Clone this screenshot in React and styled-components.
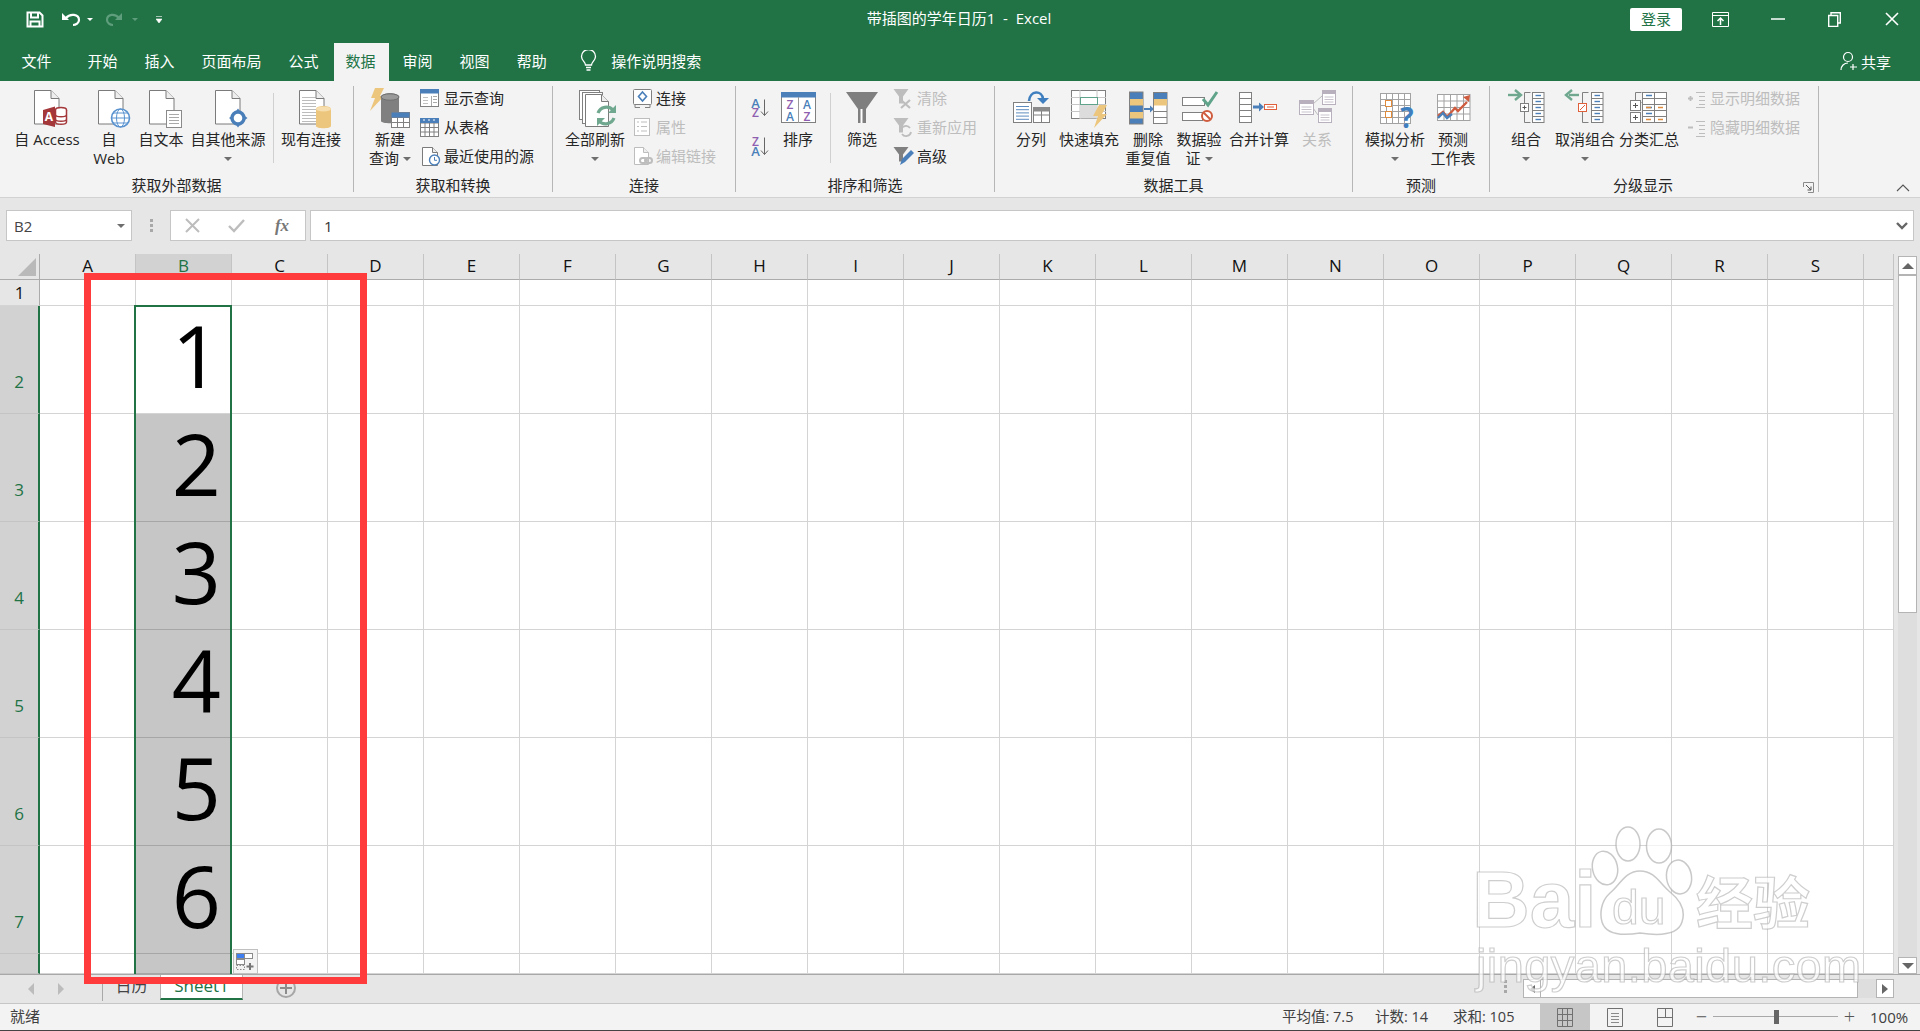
import React from "react";
import styled, { createGlobalStyle } from "styled-components";

const FONT = `"Open Sans","Noto Sans CJK SC",sans-serif`;
const GREEN = "#217346";
const BLUE = "#4a7fb9";
const ORANGE = "#edc67d";
const GRAY = "#808080";
const DIS = "#bdbdbd";

const Global = createGlobalStyle`
  html, body { margin: 0; padding: 0; background: #fff; }
  body { font-family: ${FONT}; width: 1920px; height: 1031px; overflow: hidden; }
  * { box-sizing: border-box; }
`;

const Window = styled.div`position: relative; width: 1920px; height: 1031px; overflow: hidden; display: flex; flex-direction: column; font-size: 15px; color: #262626;`;

/* Title bar */
const TitleBar = styled.div`height: 43px; background: ${GREEN}; display: grid; grid-template-columns: 1fr auto 1fr; align-items: center; color: #fff; padding-bottom: 5px;`;
const Qat = styled.div`display: flex; align-items: center; padding-left: 26px;`;
const QatGap = styled.span`display: block; width: ${p => p.$w}px; flex: none;`;
const TitleText = styled.div`font-size: 15px; line-height: 20px; white-space: pre; margin: 0 0 3px -2px;`;
const WinControls = styled.div`display: flex; justify-content: flex-end; align-items: center;`;
const Login = styled.div`width: 52px; height: 23px; margin-right: 10px; background: #fff; color: ${GREEN}; border-radius: 2px; text-align: center; line-height: 22px; font-size: 15px;`;
const WinBtn = styled.div`width: 57px; display: flex; justify-content: center; align-items: center;`;

/* Tabs */
const TabBar = styled.div`height: 38px; background: ${GREEN}; display: flex; gap: 2px; padding-left: 10px; color: #fff;`;
const Tab = styled.div`
  padding: 0 13.5px 0 11.5px; height: 38px; line-height: 36px; font-size: 15px; white-space: nowrap;
  margin-right: ${p => p.$mr || 0}px;
  background: ${p => p.$active ? "#f3f3f3" : "transparent"};
  color: ${p => p.$active ? GREEN : "#fff"};
`;
const TellMe = styled.div`display: flex; align-items: center; margin-left: 18px; gap: 14px; height: 36px; line-height: 36px;`;
const Share = styled.div`margin-left: auto; margin-right: 29px; display: flex; align-items: center; gap: 3px; height: 36px;`;

/* Ribbon */
const Ribbon = styled.div`height: 117px; background: #f3f3f3; border-bottom: 1px solid #d2d2d2; display: flex; padding: 5px 0 6px;`;
const Group = styled.div`position: relative; width: ${p => p.$w}px; border-right: 1px solid #b6b6b6; flex: none; height: 106px;`;
const GroupBody = styled.div`display: flex; height: 89px; padding-left: ${p => p.$pl}px;`;
const GroupLabel = styled.div`text-align: center; line-height: 20px; height: 17px; font-size: 15px; color: #262626; white-space: nowrap; padding-right: ${p => p.$pr || 0}px;`;
const RibbonSpacer = styled.div`position: relative; flex: 1;`;
const Big = styled.div`width: ${p => p.$w}px; flex: none; display: flex; flex-direction: column; align-items: center; color: ${p => p.$off ? DIS : "#262626"};`;
const BigIcon = styled.div`margin: 1px 0 1px;`;
const BigLine = styled.div`line-height: 19px; height: 19px; white-space: nowrap; display: flex; align-items: center; gap: 4px;`;
const Caret = styled.span`display: inline-block; width: 0; height: 0; border-left: 4px solid transparent; border-right: 4px solid transparent; border-top: 4px solid #6e6e6e;`;
const Vr = styled.div`width: 1px; height: 70px; margin: 7px ${p => p.$mr || 0}px 0 ${p => p.$ml || 0}px; background: #d0d0d0; flex: none;`;
const SmallList = styled.div`display: flex; flex-direction: column; margin: -2px 0 0 ${p => p.$ml || 0}px; flex: none;`;
const SmallRow = styled.div`height: 29px; display: flex; align-items: center; gap: 1px; white-space: nowrap; color: ${p => p.$off ? DIS : "#262626"};`;
const SmallText = styled.span`display: block; line-height: 19px;`;
const SortCol = styled.div`width: 24px; flex: none; display: flex; flex-direction: column; margin-top: 2px;`;
const Launcher = styled.svg`position: absolute; right: 4px; bottom: -1px; width: 11px; height: 11px;`;
const Collapse = styled.svg`position: absolute; right: 10px; bottom: -1px; width: 14px; height: 8px;`;
const Art = styled.svg`display: block; flex: none;`;

/* Formula bar */
const FormulaBar = styled.div`height: 56px; background: #e6e6e6; display: flex; padding: 12px 6px 0 6px; align-items: flex-start;`;
const NameBox = styled.div`width: 126px; height: 31px; background: #fff; border: 1px solid #c6c6c6; display: flex; align-items: center; justify-content: space-between; padding: 0 6px 0 7px; color: #444;`;
const Grip = styled.div`width: 38px; display: flex; flex-direction: column; align-items: center; gap: 2px; padding-top: 9px; flex: none;`;
const Dot = styled.i`display: block; width: 3px; height: 3px; background: #a8a8a8;`;
const FxBox = styled.div`width: 136px; height: 31px; background: #fff; border: 1px solid #c6c6c6; display: flex; align-items: center; gap: 28px; padding-left: 14px; flex: none;`;
const FormulaInput = styled.div`flex: 1; height: 31px; margin-left: 4px; background: #fff; border: 1px solid #c6c6c6; display: flex; align-items: center; justify-content: space-between; padding: 0 5px 0 13px; color: #333;`;

/* Sheet */
const SheetRow = styled.div`height: 720px; display: flex; background: #e6e6e6;`;
const GridWrap = styled.div`position: relative; width: 1894px; height: 720px; overflow: hidden; flex: none;`;
const Grid = styled.div`display: grid; grid-template-columns: 40px repeat(19, 96px) 30px; grid-template-rows: 26px 26px repeat(6, 108px) 20px;`;
const Corner = styled.div`background: #e6e6e6; border-right: 1px solid #ababab; border-bottom: 1px solid #ababab; display: flex; align-items: flex-end; justify-content: flex-end; padding: 0 3px 3px 0;`;
const ColHead = styled.div`
  background: ${p => p.$on ? "#d2d2d2" : "#e6e6e6"}; color: ${p => p.$on ? GREEN : "#111"};
  border-right: 1px solid #c4c4c4; border-bottom: 1px solid #ababab;
  display: flex; justify-content: center; align-items: center; font-size: 17px; line-height: 24px; padding-bottom: 2px;
`;
const RowHead = styled.div`
  background: ${p => p.$on ? "#d2d2d2" : "#e6e6e6"}; color: ${p => p.$on ? GREEN : "#111"};
  border-right: ${p => p.$on ? `2px solid ${GREEN}` : "1px solid #ababab"};
  border-bottom: 1px solid ${p => p.$on ? "#c4c4c4" : "#d4d4d4"};
  display: flex; justify-content: center; align-items: ${p => p.$tall ? "flex-end" : "center"};
  font-size: 17px; line-height: 20px; padding-bottom: ${p => p.$tall ? 21 : 0}px; overflow: hidden;
`;
const Cell = styled.div`
  background: ${p => p.$fill ? "#c6c6c6" : "#fff"};
  border-right: 1px solid #d4d4d4; border-bottom: 1px solid ${p => p.$fill ? "#a6a6a6" : "#d4d4d4"};
  display: flex; justify-content: flex-end; align-items: flex-end;
  font-family: "Open Sans", sans-serif; font-size: 86px; font-weight: 500; line-height: 100px; color: #000; padding: 0 10px 8px 0;
`;
const Selection = styled.div`position: absolute; left: 134px; top: 51px; width: 98px; height: 669px; border: 2px solid ${GREEN}; border-bottom: 0; pointer-events: none;`;
const QuickBtn = styled.div`position: absolute; left: 233px; top: 695px; width: 25px; height: 25px; background: #f3f3f3; border: 1px solid #c0c0c0; display: flex; align-items: center; justify-content: center;`;
const VScroll = styled.div`flex: 1; display: flex; flex-direction: column; padding: 2px 3px 0 4px; background: #e6e6e6;`;
const ScrollBtn = styled.div`height: ${p => p.$h}px; background: #fff; border: 1px solid #b4b4b4; display: flex; justify-content: center; align-items: center; flex: none;`;
const VThumb = styled.div`height: 338px; background: #fff; border: 1px solid #b4b4b4; flex: none;`;
const VTrack = styled.div`flex: 1; background: #dedede;`;
const Tri = styled.span`
  display: block; width: 0; height: 0;
  ${p => p.$d === "up" && `border-left:6px solid transparent;border-right:6px solid transparent;border-bottom:6px solid ${p.$c};`}
  ${p => p.$d === "down" && `border-left:6px solid transparent;border-right:6px solid transparent;border-top:6px solid ${p.$c};`}
  ${p => p.$d === "left" && `border-top:6px solid transparent;border-bottom:6px solid transparent;border-right:6px solid ${p.$c};`}
  ${p => p.$d === "right" && `border-top:6px solid transparent;border-bottom:6px solid transparent;border-left:6px solid ${p.$c};`}
`;

/* Sheet tabs */
const SheetBar = styled.div`height: 30px; background: #e6e6e6; border-top: 1px solid #a8a8a8; border-bottom: 1px solid #c6c6c6; display: flex; align-items: flex-start;`;
const NavArrows = styled.div`width: 103px; height: 24px; flex: none; display: flex; align-items: center; gap: 24px; padding-left: 28px; margin-top: 2px; border-right: 1px solid #a8a8a8;`;
const SheetTab = styled.div`
  width: ${p => p.$w}px; height: 25px; text-align: center; line-height: 22px; flex: none;
  font-size: ${p => p.$on ? 17 : 16}px;
  ${p => p.$on ? `background:#fff;color:${GREEN};border:1px solid #b4b4b4;border-top:0;border-bottom:2px solid ${GREEN};` : "color:#444;"}
`;
const AddSheet = styled.div`margin: 3px 0 0 33px; width: 20px; height: 20px; border: 2px solid #a6a6a6; border-radius: 50%; display: flex; align-items: center; justify-content: center; color: #8c8c8c; flex: none;`;
const HScrollArea = styled.div`margin-left: auto; margin-right: 26px; display: flex; align-items: flex-start; padding-top: 4px;`;
const HGrip = styled.div`display: flex; flex-direction: column; gap: 2px; margin-right: 16px; padding-top: 1px;`;
const HBtn = styled.div`width: 18px; height: 19px; background: #fff; border: 1px solid #b4b4b4; display: flex; align-items: center; justify-content: center; flex: none;`;
const HThumb = styled.div`width: 317px; height: 19px; background: #fff; border: 1px solid #b4b4b4; border-left: 0; flex: none;`;
const HTrack = styled.div`width: 18px; height: 19px; background: #dedede; flex: none;`;

/* Status */
const Status = styled.div`height: 27px; background: #f3f3f3; border-bottom: 1px solid #444; display: flex; align-items: stretch; font-size: 14.5px; color: #404040;`;
const Ready = styled.div`padding-left: 10px; line-height: 25px; font-size: 15px;`;
const StatRight = styled.div`margin-left: auto; display: flex; align-items: stretch;`;
const Stat = styled.div`width: ${p => p.$w}px; line-height: 25px; white-space: nowrap;`;
const ViewBtn = styled.div`width: 50px; display: flex; align-items: center; justify-content: center; background: ${p => p.$on ? "#c6c6c6" : "transparent"};`;
const Zoomer = styled.div`display: flex; align-items: center; width: 230px; padding-left: 5px;`;
const ZoomSign = styled.div`width: ${p => p.$w}px; font-size: 20px; line-height: 24px; color: #555; text-align: center; font-weight: 300;`;
const Slider = styled.div`position: relative; width: 125px; height: 14px; margin: 0 ${p => p.$m || 0}px; &::before { content: ""; position: absolute; left: 0; right: 0; top: 6px; height: 1px; background: #a8a8a8; }`;
const SliderThumb = styled.div`position: absolute; left: 61px; top: 0; width: 5px; height: 14px; background: #666;`;
const Pct = styled.div`margin-left: 14px; font-size: 15px; line-height: 25px; color: #404040;`;

/* Overlays */
const RedFrame = styled.div`position: absolute; left: 84px; top: 273px; width: 283px; height: 711px; border: 7px solid #ff3b3b; pointer-events: none;`;
const Mark = styled.div`
  position: absolute; white-space: nowrap; pointer-events: none; font-family: "Liberation Sans", "Noto Sans CJK SC", sans-serif;
  left: ${p => p.$x}px; top: ${p => p.$y}px; font-size: ${p => p.$s}px; line-height: 1; font-weight: ${p => p.$wt || 700};
  letter-spacing: ${p => p.$ls || 0}px;
  color: rgba(255,255,255,.72); -webkit-text-stroke: 1.2px rgba(165,165,165,.55); filter: blur(.5px);
`;
const Paw = styled.svg`position: absolute; left: 1590px; top: 820px; pointer-events: none; filter: blur(.4px);`;

const Ic = ({ x, y, w = 24, h = 22, children }) => <Art viewBox={`${x} ${y} ${w} ${h}`} width={w} height={h}>{children}</Art>;
const L = ({ c, children }) => <Art viewBox={`${c - 24} 87 48 42`} width={48} height={42}>{children}</Art>;

const Page = ({ x, y, w = 24.5, h = 33.5, f = 8, s = "#7b7b7b" }) => (
  <g fill="#fff" stroke={s} strokeWidth="1">
    <path d={`M${x} ${y}h${w - f}l${f} ${f}v${h - f}H${x}z`} />
    <path d={`M${x + w - f} ${y}v${f}h${f}`} fill="#eee" />
  </g>
);
const Rows = ({ x, y, w, n, h, s = "#a0a0a0", o = .9 }) => <g stroke={s} strokeWidth="1" opacity={o}>{Array.from({ length: n }, (_, i) => <path key={i} d={`M${x} ${y + i * h + .5}h${w}`} />)}</g>;
const Table = ({ x, y, cols, rows, cw, rh, s = GRAY, fill = "#fff" }) => (
  <g stroke={s} strokeWidth="1" fill="none">
    <rect x={x} y={y} width={cols * cw} height={rows * rh} fill={fill} />
    {Array.from({ length: cols - 1 }, (_, i) => <path key={"c" + i} d={`M${x + (i + 1) * cw} ${y}v${rows * rh}`} />)}
    {Array.from({ length: rows - 1 }, (_, i) => <path key={"r" + i} d={`M${x} ${y + (i + 1) * rh}h${cols * cw}`} />)}
  </g>
);
const ArtText = ({ x, y, fill, size = 12, children, weight = 400 }) => <text x={x} y={y} fill={fill} fontSize={size} fontWeight={weight} fontFamily="Open Sans, sans-serif" textAnchor="middle">{children}</text>;
const Bolt = ({ d, f = ORANGE }) => <path d={d} fill={f} />;
const Stack = ({ x, y, w = 11.5, n = 5, rh = 6, dash = BLUE }) => (
  <g>
    <rect x={x} y={y} width={w} height={n * rh} fill="#fff" stroke={GRAY} />
    {Array.from({ length: n }, (_, i) => (
      <g key={i}>
        {i > 0 && <path d={`M${x} ${y + i * rh}h${w}`} stroke={GRAY} />}
        {dash && <path d={`M${x + 3} ${y + i * rh + 3}h${w - 6}`} stroke={dash} strokeWidth="1.4" />}
      </g>
    ))}
  </g>
);
const Bracket = ({ x, y, h, w = 6 }) => <path d={`M${x + w} ${y}H${x}V${y + h}h${w}`} fill="none" stroke={GRAY} />;
const Funnel = ({ x, y, f = GRAY, s = 1 }) => <path d={`M${x} ${y}h${15 * s}l${-5.5 * s} ${7.5 * s}v${7 * s}h${-4 * s}v${-7 * s}z`} fill={f} />;

const icons = {
  access: <L c={47}><Page x={34.5} y={90.5} /><path d="M43 110l12-3.5V127l-12-3z" fill="#a4373a" /><ArtText x={49} y={121} size={12} weight={700} fill="#fff">A</ArtText>
    <g fill="#fff" stroke="#a4373a" strokeWidth="1.5"><ellipse cx="61" cy="110" rx="5.5" ry="2.5" /><path d="M55.5 110v12c0 3 11 3 11 0v-12M55.5 114.5c0 3 11 3 11 0M55.5 119c0 3 11 3 11 0" /></g></L>,
  web: <L c={109}><Page x={98.5} y={90.5} /><circle cx="120.5" cy="118" r="9" fill="#fff" stroke="#5a93cf" strokeWidth="1.6" /><g fill="none" stroke="#5a93cf"><ellipse cx="120.5" cy="118" rx="4" ry="9" /><path d="M111.5 118h18M113 113h15M113 123h15" /></g></L>,
  text: <L c={161}><Page x={149.5} y={90.5} /><rect x="166.5" y="110.5" width="15" height="17" fill="#fff" stroke="#8a8a8a" /><Rows x={169} y={114} w={10} n={4} h={3} /></L>,
  other: <L c={228}><Page x={215.5} y={90.5} /><circle cx="238" cy="118" r="6" fill="#fff" stroke="#4a7fb9" strokeWidth="3.4" /><path d="M229 118l4-3v6zM247.5 118l-4-3v6zM238 108.5l-3 4h6zM238 127.5l-3-4h6z" fill="#4a7fb9" /></L>,
  exist: <L c={311}><Page x={299.5} y={90.5} /><Rows x={302} y={97} w={14} n={9} h={3} o={.7} /><path d="M316 109c0-4 15-4 15 0v17c0 3-15 3-15 0z" fill={ORANGE} /><ellipse cx="323.5" cy="109" rx="7.5" ry="2.6" fill="#f6deae" /></L>,
  query: <L c={390}><Bolt d="M375 88h9l-4 8h4l-14 15 5-13h-4z" /><path d="M381 97c0-5 18-5 18 0v24c0 3-18 3-18 0z" fill="#808080" /><ellipse cx="390" cy="97" rx="9" ry="3.2" fill="#9a9a9a" stroke="#6f6f6f" /><Table x={391.5} y={112.5} cols={3} rows={3} cw={6} rh={5} /><rect x="391.5" y="112.5" width="18" height="5" fill={BLUE} /></L>,
  show: <Ic x={419} y={88}><rect x="420.5" y="89.5" width="18" height="17" fill="#fff" stroke={GRAY} /><rect x="420" y="89" width="19" height="4.5" fill={BLUE} /><Rows x={423} y={97} w={5} n={3} h={3} s="#bbb" /><path d="M431.5 96v10" stroke="#aaa" /><Rows x={433} y={96} w={4} n={3} h={3} /></Ic>,
  fromtab: <Ic x={419} y={117}><Table x={420.5} y={118.5} cols={4} rows={4} cw={4.5} rh={4.5} /><rect x="420" y="118" width="19" height="5" fill={BLUE} /><path d="M423 120h2M428 120h2M433 120h2" stroke="#fff" /></Ic>,
  recent: <Ic x={419} y={146}><Page x={422.5} y={147.5} w={15} h={18} f={5} /><circle cx="434.5" cy="160" r="5" fill="#fff" stroke="#4a7fb9" strokeWidth="1.4" /><path d="M434.5 157v3.3h2.5" fill="none" stroke="#4a7fb9" /></Ic>,
  refresh: <L c={595}><g><rect x="579.5" y="90.5" width="20" height="29" fill="#fff" stroke={GRAY} /><rect x="582.5" y="92.5" width="20" height="31" fill="#fff" stroke={GRAY} /><Page x={585.5} y={94.5} w={23} h={32} f={7} /></g><g fill="none" stroke="#6fa88f" strokeWidth="3.2"><path d="M598 113a9 9 0 0 1 15-3" /><path d="M614 118a9 9 0 0 1-15 3" /></g><path d="M616 105v8h-8zM597 126v-8h8z" fill="#6fa88f" /></L>,
  conn: <Ic x={631} y={88}><rect x="633.5" y="89.5" width="18" height="15" rx="1" fill="#fff" stroke={GRAY} /><path d="M642.5 92l4 4.5-4 4.5-4-4.5z" fill="none" stroke="#4a7fb9" strokeWidth="1.6" /><path d="M635 104.500v3h5M650 104.500v3h-5" fill="none" stroke={GRAY} /></Ic>,
  prop: <Ic x={631} y={117}><rect x="634.500" y="118.5" width="15" height="17" fill="#fff" stroke={DIS} /><path d="M637 122h2M641 122h6M637 126.500h2M641 126.500h6M637 131h2M641 131h6" stroke={DIS} /></Ic>,
  editlink: <Ic x={631} y={146}><Page x={634.5} y={147.5} w={14} h={17} f={5} s={DIS} /><g fill="none" stroke={DIS} strokeWidth="2"><rect x="640" y="158" width="7" height="5" rx="2.5" /><rect x="645" y="158" width="7" height="5" rx="2.5" /></g></Ic>,
  az: <Ic x={748} y={88.5} w={24} h={39}><ArtText x={755.500} y={108.500} size={13} weight={600} fill={BLUE}>A</ArtText><ArtText x={755.500} y={117.500} size={12} weight={600} fill="#8e5fb0">Z</ArtText><path d="M764.500 100v16m-3.500-4l3.500 4 3.500-4" fill="none" stroke="#666" /></Ic>,
  za: <Ic x={748} y={127.5} w={24} h={39}><ArtText x={755.500} y={146.500} size={12} weight={600} fill="#8e5fb0">Z</ArtText><ArtText x={755.500} y={156} size={13} weight={600} fill={BLUE}>A</ArtText><path d="M764.500 138v17m-3.500-4l3.500 4 3.500-4" fill="none" stroke="#666" /></Ic>,
  sort: <L c={798}><rect x="781.5" y="92.5" width="34" height="30" fill="#fff" stroke={GRAY} /><rect x="781" y="92" width="35" height="5.500" fill={BLUE} /><path d="M798.500 97v26" stroke="#999" /><ArtText x={790} y={109} size={12} weight={600} fill="#8e5fb0">Z</ArtText><ArtText x={790} y={120.500} size={12} weight={600} fill={BLUE}>A</ArtText><ArtText x={807} y={109} size={12} weight={600} fill={BLUE}>A</ArtText><ArtText x={807} y={120.500} size={12} weight={600} fill="#8e5fb0">Z</ArtText></L>,
  filter: <L c={862}><path d="M846 92h32l-12 17v14h-8v-14z" fill="#7f7f7f" /><path d="M861.500 109v14" stroke="#fff" strokeWidth="2" /></L>,
  clear: <Ic x={892} y={88}><Funnel x={893.5} y={89} f={DIS} /><path d="M901 100l9 8m0-8l-9 8" stroke={DIS} strokeWidth="2.2" /></Ic>,
  reapply: <Ic x={892} y={117}><Funnel x={893.5} y={118} f={DIS} /><g fill="none" stroke={DIS} strokeWidth="1.8"><path d="M901 130a5 5 0 0 1 9-2" /><path d="M911 132a5 5 0 0 1-9 2" /></g></Ic>,
  advanced: <Ic x={892} y={146}><Funnel x={893.500} y={147} /><path d="M900 165l2-6 9-9 3 3-9 9z" fill="#4a7fb9" /></Ic>,
  split: <L c={1031}><rect x="1013.500" y="102.500" width="18" height="20" fill="#fff" stroke={GRAY} /><Rows x={1016} y={106} w={13} n={5} h={3.2} s="#4a7fb9" /><Table x={1033.500} y={107.500} cols={2} rows={2} cw={8} rh={7.500} /><rect x="1033" y="107" width="16.500" height="4.500" fill="#8a8a8a" /><path d="M1029 101c1-11 13-11 14-2" fill="none" stroke="#3f7fbf" strokeWidth="2.6" /><path d="M1037 98h12l-6 6z" fill="#3f7fbf" /></L>,
  flash: <L c={1089}><rect x="1071.500" y="90.500" width="34" height="28" fill="#fff" stroke={GRAY} /><path d="M1071 97.500h35M1071 104.500h35M1071 111.500h35M1080 90v29M1097 90v29" stroke="#c6c6c6" /><rect x="1080" y="104.500" width="17" height="14" fill="#dcdcdc" /><rect x="1080.500" y="97.500" width="17" height="7" fill="#fff" stroke="#5fa48a" /><Bolt d="M1099 105h8l-5 9h5l-13 14 4-12h-5z" /></L>,
  dedupe: <L c={1148}><rect x="1129.500" y="92" width="13.500" height="32" fill={BLUE} stroke={GRAY} /><rect x="1130" y="99" width="13" height="6.500" fill={ORANGE} /><rect x="1130" y="112" width="13" height="6.500" fill={ORANGE} /><path d="M1144 109h7" stroke={BLUE} strokeWidth="2" /><path d="M1150 105.500l4 3.500-4 3.500z" fill={BLUE} /><rect x="1153.500" y="92.500" width="13.500" height="31" fill="#fff" stroke={GRAY} /><rect x="1154" y="93" width="13" height="6" fill={BLUE} /><rect x="1154" y="99" width="13" height="6.500" fill={ORANGE} /><path d="M1153 111.500h14M1153 117.500h14" stroke={GRAY} /></L>,
  valid: <L c={1199}><rect x="1182.500" y="97.500" width="22" height="8" fill="#fff" stroke={GRAY} /><rect x="1182.500" y="112.500" width="20" height="8" fill="#fff" stroke={GRAY} /><path d="M1203 99l5 6 9-13" fill="none" stroke="#5fa48a" strokeWidth="3" /><circle cx="1207" cy="116" r="5" fill="#fff" stroke="#cf5c3e" strokeWidth="2" /><path d="M1203.500 112.500l7 7" stroke="#cf5c3e" strokeWidth="2" /></L>,
  merge: <L c={1259}><Table x={1239.500} y={92.500} cols={1} rows={5} cw={12} rh={6} /><path d="M1253 107h8" stroke={BLUE} strokeWidth="3" /><path d="M1259 102.500l5 4.500-5 4.500z" fill={BLUE} /><rect x="1264.500" y="104.500" width="12" height="5" fill="#fff" stroke="#e0603c" /><path d="M1267 107h7" stroke="#e0603c" /></L>,
  relation: <L c={1317}><path d="M1313 104l9-8M1313 108l5 7" stroke={DIS} fill="none" />{[[1299.5, 100.5, 14], [1322.5, 90.5, 13], [1318.5, 108.5, 13]].map(([x, y, w], i) => <g key={i}><rect x={x} y={y} width={w} height={14} fill="#fff" stroke="#b8b0bc" /><rect x={x} y={y} width={w} height={3.5} fill="#b8b0bc" /><Rows x={x + 2} y={y + 6} w={w - 4} n={3} h={2.500} s="#c4bcc8" /></g>)}</L>,
  whatif: <L c={1395}><Table x={1380.500} y={93.500} cols={5} rows={5} cw={6} rh={6} s="#a2a2a2" /><rect x="1385.500" y="100.500" width="6" height="6" fill="#fff" stroke="#e08a3c" /><rect x="1385.500" y="111.500" width="6" height="6" fill="#fff" stroke="#e08a3c" /><ArtText x={1407} y={128} size={28} weight={700} fill="#3f7fbf">?</ArtText></L>,
  forecast: <L c={1453}><Table x={1437.500} y={94.500} cols={5} rows={4} cw={6.500} rh={6.500} s="#a2a2a2" /><path d="M1438 116l5-4 4 5 8-9 3 3 9-9" fill="none" stroke="#cf5c3e" strokeWidth="2.400" /><path d="M1463 97l7-2-1 7z" fill="#cf5c3e" /><path d="M1438 118l5-5 4 5 5-4" fill="none" stroke="#4a7fb9" strokeWidth="2.400" /></L>,
  group: <L c={1526}><path d="M1508 95h11" stroke="#6fa88f" strokeWidth="2.400" /><path d="M1515 90l6 5-6 5" fill="none" stroke="#6fa88f" strokeWidth="2.400" /><Bracket x={1524.500} y={92.500} h={30} /><rect x="1520.500" y="103.500" width="8" height="8" fill="#fff" stroke={GRAY} /><path d="M1522.500 107.500h4M1524.500 105.500v4" stroke="#555" /><Stack x={1532.500} y={92.500} /></L>,
  ungroup: <L c={1585}><path d="M1569 95h10" stroke="#6fa88f" strokeWidth="2.400" /><path d="M1572 90l-6 5 6 5" fill="none" stroke="#6fa88f" strokeWidth="2.400" /><Bracket x={1582.500} y={92.500} h={30} /><rect x="1578.500" y="103.500" width="8" height="8" fill="#fff" stroke="#e0603c" /><path d="M1580 110l5-5" stroke="#e0603c" /><Stack x={1591.500} y={92.500} /></L>,
  subtotal: <L c={1649}><Bracket x={1635.500} y={92.500} h={10} /><Table x={1642.500} y={92.500} cols={2} rows={5} cw={12} rh={6} /><path d="M1646 95.500h6M1646 107.500h6M1646 113.500h6" stroke={BLUE} strokeWidth="1.300" /><path d="M1646 107.500h5M1658 107.500h5M1646 119.500h5M1658 119.500h5" stroke="#e08a3c" strokeWidth="1.300" /><g fill="#fff" stroke={GRAY}><rect x="1630.500" y="100.500" width="10" height="10" /><rect x="1630.500" y="112.500" width="10" height="10" /></g><path d="M1633 105.500h5M1635.500 103v5M1633 117.500h5M1635.500 115v5" stroke="#555" /></L>,
  showd: <Ic x={1685} y={88}><path d="M1688 98.500h5M1690.500 96v5" stroke={DIS} strokeWidth="1.800" /><path d="M1696 92.500h9M1699 96.500h6M1699 100.500h6M1699 104.500h6M1696 107.500h9" stroke={DIS} /></Ic>,
  hided: <Ic x={1685} y={117}><path d="M1688 127.500h5" stroke={DIS} strokeWidth="2" /><path d="M1696 121.500h9M1699 125.500h6M1699 129.500h6M1699 133.500h6M1696 136.500h9" stroke={DIS} /></Ic>,
};

const BigBtn = ({ w, icon, lines, caret, off }) => (
  <Big $w={w} $off={off}>
    <BigIcon>{icons[icon]}</BigIcon>
    {lines.map((t, i) => <BigLine key={i}>{t}{caret === "inline" && i === lines.length - 1 && <Caret />}</BigLine>)}
    {caret === "below" && <BigLine><Caret /></BigLine>}
  </Big>
);
const Small = ({ icon, text, off }) => <SmallRow $off={off}>{icons[icon]}<SmallText>{text}</SmallText></SmallRow>;

const COLS = "ABCDEFGHIJKLMNOPQRS".split("");
const ROWS = [26, 108, 108, 108, 108, 108, 108, 20];
const VALUES = { 2: 1, 3: 2, 4: 3, 5: 4, 6: 5, 7: 6 };

export default function App() {
  return (
    <Window>
      <Global />
      <TitleBar>
        <Qat>
          <Art width="18" height="17" viewBox="0 0 18 17"><path d="M1.500 1.500h12l3 3v11h-15z M5 1.500v5h7v-5 M4.500 15.500v-5h9v5" fill="none" stroke="#fff" strokeWidth="2" /></Art>
          <QatGap $w={17} />
          <Art width="20" height="16" viewBox="0 0 20 16"><path d="M5 7c4-5 13-4 13 2 0 3-3 5-6 5" fill="none" stroke="#fff" strokeWidth="2.200" /><path d="M1 2v7h7z" fill="#fff" /></Art>
          <QatGap $w={6} />
          <Caret style={{ borderTopColor: "#fff", borderLeftWidth: 3, borderRightWidth: 3, borderTopWidth: 3 }} />
          <QatGap $w={12} />
          <Art width="18" height="16" viewBox="0 0 18 16"><path d="M14 7C10 2 2 3 2 9c0 3 3 5 6 5" fill="none" stroke="#5f9e7c" strokeWidth="2.200" /><path d="M17 2v7h-7z" fill="#5f9e7c" /></Art>
          <QatGap $w={9} />
          <Caret style={{ borderTopColor: "#5f9e7c", borderLeftWidth: 3, borderRightWidth: 3, borderTopWidth: 3 }} />
          <QatGap $w={18} />
          <Art width="6" height="7" viewBox="0 0 6 7"><path d="M0 .500h6M0 3h6L3 7z" fill="#fff" stroke="#fff" strokeWidth=".6" /></Art>
        </Qat>
        <TitleText>带插图的学年日历1  -  Excel</TitleText>
        <WinControls>
          <Login>登录</Login>
          <WinBtn><Art width="17" height="15" viewBox="0 0 17 15"><path d="M.5.500h16v14H.5zM.5 3.500h16" fill="none" stroke="#fff" /><path d="M8.500 13V6m-3 3l3-3 3 3" fill="none" stroke="#fff" strokeWidth="1.500" /></Art></WinBtn>
          <WinBtn><Art width="14" height="2" viewBox="0 0 14 2"><path d="M0 1h14" stroke="#fff" strokeWidth="1.500" /></Art></WinBtn>
          <WinBtn><Art width="13" height="15" viewBox="0 0 13 15"><path d="M3 3V.700h9.300V11H10M.7 3.500h9v11h-9z" fill="none" stroke="#fff" strokeWidth="1.400" /></Art></WinBtn>
          <WinBtn><Art width="14" height="14" viewBox="0 0 14 14"><path d="M1 1l12 12M13 1L1 13" stroke="#fff" strokeWidth="1.600" /></Art></WinBtn>
        </WinControls>
      </TitleBar>
      <TabBar>
        <Tab $mr={9}>文件</Tab><Tab>开始</Tab><Tab>插入</Tab><Tab>页面布局</Tab><Tab>公式</Tab>
        <Tab $active>数据</Tab><Tab>审阅</Tab><Tab>视图</Tab><Tab>帮助</Tab>
        <TellMe>
          <Art width="17" height="22" viewBox="0 0 17 22"><path d="M5.500 15c0-3-4-4.500-4-8.500a7 7 0 0 1 14 0c0 4-4 5.500-4 8.500z" fill="none" stroke="#fff" strokeWidth="1.300" /><path d="M6 17.500h5M6.500 20h4" stroke="#fff" strokeWidth="1.500" /></Art>
          操作说明搜索
        </TellMe>
        <Share>
          <Art width="18" height="20" viewBox="0 0 18 20"><circle cx="8" cy="6" r="4.500" fill="none" stroke="#fff" strokeWidth="1.200" /><path d="M1 19c0-4 3-7 7-7" fill="none" stroke="#fff" strokeWidth="1.200" /><path d="M13 13v6M10 16h7" stroke="#fff" strokeWidth="1.200" /></Art>
          共享
        </Share>
      </TabBar>
      <Ribbon>
        <Group $w={354}>
          <GroupBody $pl={10}>
            <BigBtn w={74} icon="access" lines={["自 Access"]} />
            <BigBtn w={50} icon="web" lines={["自", "Web"]} />
            <BigBtn w={54} icon="text" lines={["自文本"]} />
            <BigBtn w={80} icon="other" lines={["自其他来源"]} caret="below" />
            <Vr $ml={5} />
            <BigBtn w={74} icon="exist" lines={["现有连接"]} />
          </GroupBody>
          <GroupLabel>获取外部数据</GroupLabel>
        </Group>
        <Group $w={199}>
          <GroupBody $pl={12}>
            <BigBtn w={48} icon="query" lines={["新建", "查询"]} caret="inline" />
            <SmallList $ml={5}>
              <Small icon="show" text="显示查询" />
              <Small icon="fromtab" text="从表格" />
              <Small icon="recent" text="最近使用的源" />
            </SmallList>
          </GroupBody>
          <GroupLabel>获取和转换</GroupLabel>
        </Group>
        <Group $w={183}>
          <GroupBody $pl={7}>
            <BigBtn w={70} icon="refresh" lines={["全部刷新"]} caret="below" />
            <SmallList $ml={1}>
              <Small icon="conn" text="连接" />
              <Small icon="prop" text="属性" off />
              <Small icon="editlink" text="编辑链接" off />
            </SmallList>
          </GroupBody>
          <GroupLabel>连接</GroupLabel>
        </Group>
        <Group $w={259}>
          <GroupBody $pl={12}>
            <SortCol>{icons.az}{icons.za}</SortCol>
            <BigBtn w={52} icon="sort" lines={["排序"]} />
            <Vr $ml={6} $mr={5} />
            <BigBtn w={52} icon="filter" lines={["筛选"]} />
            <SmallList $ml={4}>
              <Small icon="clear" text="清除" off />
              <Small icon="reapply" text="重新应用" off />
              <Small icon="advanced" text="高级" />
            </SmallList>
          </GroupBody>
          <GroupLabel>排序和筛选</GroupLabel>
        </Group>
        <Group $w={358}>
          <GroupBody $pl={10}>
            <BigBtn w={52} icon="split" lines={["分列"]} />
            <BigBtn w={64} icon="flash" lines={["快速填充"]} />
            <BigBtn w={54} icon="dedupe" lines={["删除", "重复值"]} />
            <BigBtn w={48} icon="valid" lines={["数据验", "证"]} caret="inline" />
            <BigBtn w={72} icon="merge" lines={["合并计算"]} />
            <BigBtn w={44} icon="relation" lines={["关系"]} off />
          </GroupBody>
          <GroupLabel>数据工具</GroupLabel>
        </Group>
        <Group $w={137}>
          <GroupBody $pl={8}>
            <BigBtn w={68} icon="whatif" lines={["模拟分析"]} caret="below" />
            <BigBtn w={48} icon="forecast" lines={["预测", "工作表"]} />
          </GroupBody>
          <GroupLabel>预测</GroupLabel>
        </Group>
        <Group $w={329}>
          <GroupBody $pl={7}>
            <BigBtn w={58} icon="group" lines={["组合"]} caret="below" />
            <BigBtn w={60} icon="ungroup" lines={["取消组合"]} caret="below" />
            <BigBtn w={68} icon="subtotal" lines={["分类汇总"]} />
            <SmallList $ml={2}>
              <Small icon="showd" text="显示明细数据" off />
              <Small icon="hided" text="隐藏明细数据" off />
            </SmallList>
          </GroupBody>
          <GroupLabel $pr={22}>分级显示</GroupLabel>
          <Launcher viewBox="0 0 11 11"><path d="M.5 5V.5H10.500V10.500H5" fill="none" stroke="#8a8a8a" /><path d="M3 3l5 5M8 4.500V8H4.500" fill="none" stroke="#555" /></Launcher>
        </Group>
        <RibbonSpacer>
          <Collapse viewBox="0 0 14 8"><path d="M1 7l6-6 6 6" fill="none" stroke="#555" strokeWidth="1.100" /></Collapse>
        </RibbonSpacer>
      </Ribbon>
      <FormulaBar>
        <NameBox>B2<Caret /></NameBox>
        <Grip><Dot /><Dot /><Dot /></Grip>
        <FxBox>
          <Art width="15" height="15" viewBox="0 0 15 15"><path d="M1 1l13 13M14 1L1 14" stroke="#bdbdbd" strokeWidth="2" /></Art>
          <Art width="17" height="14" viewBox="0 0 17 14"><path d="M1 7l5 5L16 1" fill="none" stroke="#bdbdbd" strokeWidth="2.400" /></Art>
          <Art width="18" height="22" viewBox="0 0 18 22"><text x="9" y="16" textAnchor="middle" fontFamily="Liberation Serif, serif" fontStyle="italic" fontWeight="700" fontSize="17" fill="#777">fx</text></Art>
        </FxBox>
        <FormulaInput>1
          <Art width="12" height="8" viewBox="0 0 12 8"><path d="M1 1l5 5 5-5" fill="none" stroke="#666" strokeWidth="2.400" /></Art>
        </FormulaInput>
      </FormulaBar>
      <SheetRow>
        <GridWrap>
          <Grid>
            <Corner><Art width="18" height="18" viewBox="0 0 18 18"><path d="M18 0v18H0z" fill="#b9b9b9" /></Art></Corner>
            {COLS.map(c => <ColHead key={c} $on={c === "B"}>{c}</ColHead>)}
            <ColHead />
            {ROWS.map((_, r) => {
              const n = r + 1;
              return (
                <React.Fragment key={n}>
                  <RowHead $on={n > 1} $tall={n > 1 && n < 8}>{n < 8 ? n : ""}</RowHead>
                  {[...COLS, "T"].map(c => <Cell key={c} $fill={c === "B" && n > 2}>{c === "B" && VALUES[n] ? VALUES[n] : ""}</Cell>)}
                </React.Fragment>
              );
            })}
          </Grid>
          <Selection />
          <QuickBtn>
            <Art width="19" height="18" viewBox="0 0 19 18"><rect x=".5" y=".5" width="8" height="5" fill="#3f7ef0" stroke="#8a8a8a" /><rect x="8.500" y=".5" width="8" height="5" fill="#fff" stroke="#8a8a8a" /><rect x=".5" y="6.500" width="8" height="5" fill="#fff" stroke="#8a8a8a" /><rect x=".5" y="12.500" width="8" height="4" fill="none" stroke="#8a8a8a" strokeDasharray="1.500 1.500" /><path d="M14 10v7M10.500 13.500h7" stroke="#777" strokeWidth="2" /></Art>
          </QuickBtn>
        </GridWrap>
        <VScroll>
          <ScrollBtn $h={19}><Tri $d="up" $c="#666" /></ScrollBtn>
          <VThumb />
          <VTrack />
          <ScrollBtn $h={17}><Tri $d="down" $c="#666" /></ScrollBtn>
        </VScroll>
      </SheetRow>
      <SheetBar>
        <NavArrows><Tri $d="left" $c="#bcbcbc" /><Tri $d="right" $c="#bcbcbc" /></NavArrows>
        <SheetTab $w={57}>日历</SheetTab>
        <SheetTab $w={83} $on>Sheet1</SheetTab>
        <AddSheet><Art width="12" height="12" viewBox="0 0 12 12"><path d="M6 0v12M0 6h12" stroke="#8c8c8c" strokeWidth="2" /></Art></AddSheet>
        <HScrollArea>
          <HGrip><Dot /><Dot /><Dot /></HGrip>
          <HBtn><Tri $d="left" $c="#666" style={{ borderTopWidth: 4, borderBottomWidth: 4, borderRightWidth: 5 }} /></HBtn>
          <HThumb />
          <HTrack />
          <HBtn><Tri $d="right" $c="#666" style={{ borderTopWidth: 5, borderBottomWidth: 5, borderLeftWidth: 6 }} /></HBtn>
        </HScrollArea>
      </SheetBar>
      <Status>
        <Ready>就绪</Ready>
        <StatRight>
          <Stat $w={93}>平均值: 7.5</Stat>
          <Stat $w={78}>计数: 14</Stat>
          <Stat $w={87}>求和: 105</Stat>
          <ViewBtn $on><Art width="16" height="19" viewBox="0 0 16 19"><path d="M.5.500h15v18H.5zM5.500.5v18M10.500.5v18M.5 6.500h15M.5 12.500h15" fill="none" stroke="#707070" /></Art></ViewBtn>
          <ViewBtn><Art width="16" height="19" viewBox="0 0 16 19"><path d="M.5.500h15v18H.5z" fill="none" stroke="#707070" /><path d="M4 5.500h8M4 8.500h8M4 11.500h8M4 14.500h8" stroke="#8a8a8a" /></Art></ViewBtn>
          <ViewBtn><Art width="16" height="19" viewBox="0 0 16 19"><path d="M.5.500h15v18H.5zM8.500.5v9M.5 9.500h15" fill="none" stroke="#707070" /></Art></ViewBtn>
          <Zoomer>
            <ZoomSign $w={13}>−</ZoomSign>
            <Slider $m={5}><SliderThumb /></Slider>
            <ZoomSign $w={13}>+</ZoomSign>
            <Pct>100%</Pct>
          </Zoomer>
        </StatRight>
      </Status>
      <RedFrame />
      <Paw width="110" height="125" viewBox="1590 820 110 125" fill="rgba(255,255,255,.7)" stroke="rgba(165,165,165,.6)" strokeWidth="1.500">
        <ellipse cx="1628" cy="844" rx="12" ry="17" />
        <ellipse cx="1659" cy="846" rx="12.500" ry="17" />
        <ellipse cx="1605" cy="868" rx="12.500" ry="17" transform="rotate(-12 1605 868)" />
        <ellipse cx="1679" cy="877" rx="12.500" ry="17" transform="rotate(-8 1679 877)" />
        <path d="M1640 871c-15 0-20 14-30 22-10 9-10 22-8 29 4 13 20 14 38 11 20 3 38 2 42-11 4-12-2-22-12-30-10-8-15-21-30-21z" />
      </Paw>
      <Mark $x={1472} $y={860} $s={80}>Bai</Mark>
      <Mark $x={1612} $y={884} $s={48} $wt={400}>du</Mark>
      <Mark $x={1696} $y={876} $s={57}>经验</Mark>
      <Mark $x={1476} $y={942} $s={47} $wt={400} $ls={0.4}>jingyan.baidu.com</Mark>
    </Window>
  );
}
